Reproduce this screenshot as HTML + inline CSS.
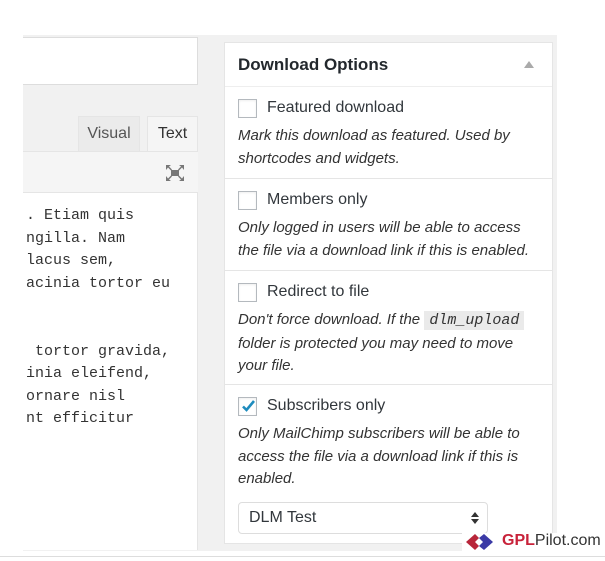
<!DOCTYPE html>
<html><head><meta charset="utf-8"><style>
*{box-sizing:border-box;margin:0;padding:0}
body{width:605px;height:561px;background:#fff;position:relative;overflow:hidden;font-family:"Liberation Sans",sans-serif;color:#23282d}
.bg{position:absolute;left:23px;top:35px;width:534px;height:516px;background:#f1f1f1}
.title{position:absolute;left:23px;top:37px;width:175px;height:48px;background:#fff;border:1px solid #ddd;border-left:none}
.tab{position:absolute;top:116px;height:35px;font-size:16px;color:#555;padding-top:8px;text-align:center}
.tb{position:absolute;left:23px;top:151px;width:175px;height:42px;background:#f5f5f5;border-top:1px solid #e5e5e5;border-bottom:1px solid #e5e5e5}
.ta{position:absolute;left:23px;top:193px;width:175px;height:357px;background:#fff;border-right:1px solid #e5e5e5;font-family:"Liberation Mono",monospace;font-size:15px;line-height:22.6px;color:#333;padding:12px 0 0 3px;white-space:pre;overflow:hidden}
.panel{position:absolute;left:224px;top:42px;width:329px;height:502px;background:#fff;border:1px solid #e5e5e5}
.hd{height:44px;border-bottom:1px solid #eee;padding:12px 0 0 13px;font-weight:bold;font-size:17px;color:#23282d}
.arr{position:absolute;right:18px;top:18px;width:0;height:0;border-left:5px solid transparent;border-right:5px solid transparent;border-bottom:7px solid #aaa}
.sec{border-bottom:1px solid #e5e5e5;padding:10px 13px 0 13px}
.lb{font-size:16px;color:#32373c;display:flex;align-items:center;height:22px}
.cb{width:19px;height:19px;border:1px solid #b4b9be;margin-right:10px;box-shadow:inset 0 1px 2px rgba(0,0,0,.07);position:relative}
.d{font-style:italic;font-size:15px;line-height:22.5px;color:#333;margin-top:6px}
code{font-family:"Liberation Mono",monospace;font-style:italic;background:#eaeaea;padding:1px 5px;font-size:15px}
.sel{margin-top:11px;width:250px;height:32px;border:1px solid #ddd;border-radius:4px;font-size:16px;padding:6px 10px;position:relative;color:#32373c}
.line{position:absolute;left:0;top:556px;width:605px;height:1px;background:#ddd}
</style></head><body>
<div class="bg"></div>
<div class="title"></div>
<div class="tab" style="left:78px;width:62px;background:#ebebeb;border:1px solid #e5e5e5;border-bottom:none">Visual</div>
<div class="tab" style="left:147px;width:51px;background:#f5f5f5;border:1px solid #e5e5e5;border-bottom:none;color:#333">Text</div>
<div class="tb">
<svg style="position:absolute;left:142px;top:12px" width="20" height="18" viewBox="0 0 20 18"><g fill="#777"><rect x="6" y="6" width="8" height="6"/><path d="M1 1l5 0-2 1.5 3 3-1 1-3-3L1 6z"/><path d="M19 1l-5 0 2 1.5-3 3 1 1 3-3L19 6z"/><path d="M1 17l5 0-2-1.5 3-3-1-1-3 3L1 12z"/><path d="M19 17l-5 0 2-1.5-3-3 1-1 3 3L19 12z"/></g></svg>
</div>
<div class="ta">. Etiam quis
ngilla. Nam
lacus sem,
acinia tortor eu


 tortor gravida,
inia eleifend,
ornare nisl
nt efficitur</div>
<div class="panel">
<div class="hd">Download Options<div class="arr"></div></div>
<div class="sec" style="height:92px"><div class="lb"><div class="cb"></div>Featured download</div><div class="d">Mark this download as featured. Used by shortcodes and widgets.</div></div>
<div class="sec" style="height:92px"><div class="lb"><div class="cb"></div>Members only</div><div class="d">Only logged in users will be able to access the file via a download link if this is enabled.</div></div>
<div class="sec" style="height:114px"><div class="lb"><div class="cb"></div>Redirect to file</div><div class="d">Don't force download. If the <code>dlm_upload</code> folder is protected you may need to move your file.</div></div>
<div class="sec" style="border:none"><div class="lb"><div class="cb"><svg style="position:absolute;left:1px;top:0" width="17" height="17" viewBox="0 0 17 17"><path d="M3 8.5l3.5 3.5L14 3" stroke="#1e8cbe" stroke-width="2.6" fill="none"/></svg></div>Subscribers only</div><div class="d">Only MailChimp subscribers will be able to access the file via a download link if this is enabled.</div>
<div class="sel">DLM Test<svg style="position:absolute;right:8px;top:8px" width="8" height="14" viewBox="0 0 8 14"><path d="M0 6L4 1 8 6zM0 8l4 5 4-5z" fill="#333"/></svg></div></div>
</div>
<div style="position:absolute;left:462px;top:533px;width:140px;height:20px;background:#fff"></div>
<svg style="position:absolute;left:466px;top:533px" width="32" height="18" viewBox="0 0 32 18"><path d="M0 9L9 1 13 5 9 9 13 13 9 17z" fill="#b8263a"/><path d="M13 5L18 1 27 9 18 17 13 13 17 9z" fill="#3b3aa6"/></svg>
<div style="position:absolute;left:502px;top:532px;font-size:16px;color:#333"><b style="color:#c8223a">GPL</b>Pilot.com</div>
<div class="line"></div>
</body></html>
